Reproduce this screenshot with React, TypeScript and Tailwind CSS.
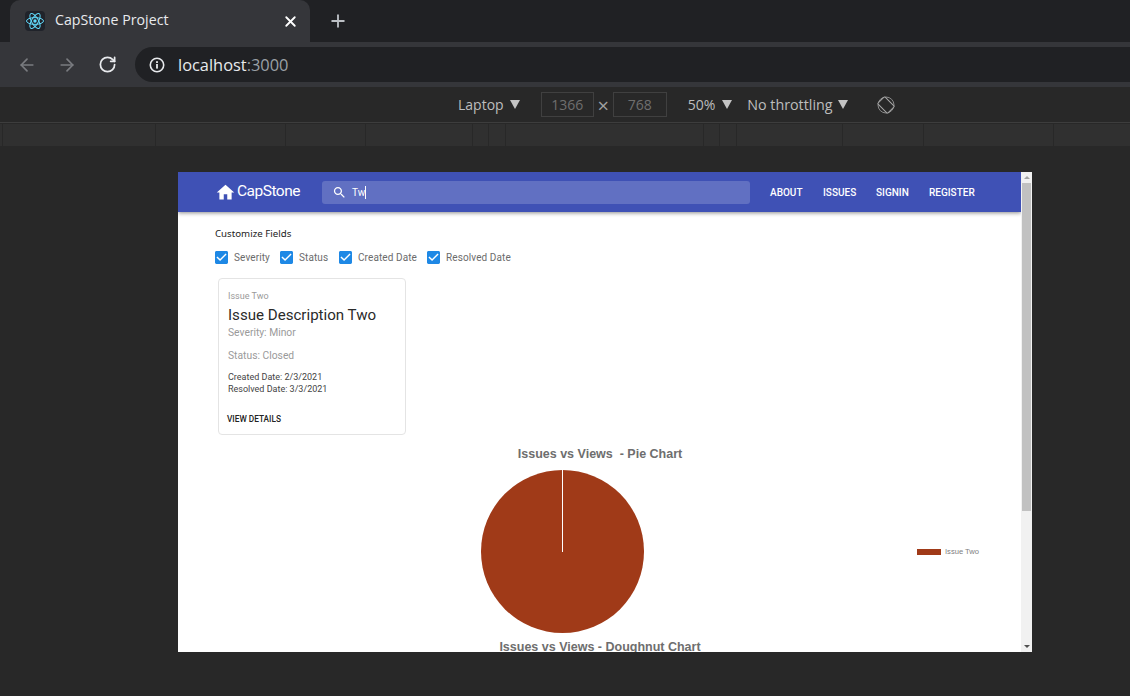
import React from 'react';
import { ArrowLeft, ArrowRight, RotateCw, X, Plus } from 'lucide-react';

const rulerSegments = [2, 152, 129, 79, 106, 15, 16, 197, 15, 16, 105, 80, 129];

function ReactFavicon() {
  return (
    <svg width="20" height="20" viewBox="0 0 20 20" className="bg-[#20232a] rounded-sm" fill="none" stroke="#61dafb" strokeWidth="1">
      <ellipse cx="10" cy="10" rx="8.5" ry="3.4" />
      <ellipse cx="10" cy="10" rx="8.5" ry="3.4" transform="rotate(60 10 10)" />
      <ellipse cx="10" cy="10" rx="8.5" ry="3.4" transform="rotate(120 10 10)" />
      <circle cx="10" cy="10" r="1.7" fill="#61dafb" stroke="none" />
    </svg>
  );
}

function InfoIcon() {
  return (
    <svg width="16" height="16" viewBox="0 0 16 16" fill="none">
      <circle cx="8" cy="8" r="6.7" stroke="#e8eaed" strokeWidth="1.6" />
      <rect x="7.1" y="7" width="1.8" height="4.6" fill="#e8eaed" />
      <rect x="7.1" y="4.2" width="1.8" height="1.8" fill="#e8eaed" />
    </svg>
  );
}

function Caret({ className }: { className: string }) {
  return (
    <svg width="10" height="9" viewBox="0 0 10 9" className={className}>
      <path d="M0 0h10L5 9z" fill="#c4c4c4" />
    </svg>
  );
}

function RotateIcon() {
  return (
    <svg width="18" height="18" viewBox="0 0 18 18" fill="none" stroke="#a8a8a8" strokeWidth="1">
      <circle cx="9" cy="9" r="8" stroke="#8a8a8a" />
      <rect x="4" y="2" width="10" height="14" rx="1.2" transform="rotate(-45 9 9)" fill="#282828" />
    </svg>
  );
}

function CheckField({ label, className }: { label: string; className: string }) {
  return (
    <div className={`flex items-center ${className}`}>
      <svg width="13" height="13" viewBox="3 3 18 18" className="mr-[6px] shrink-0">
        <path d="M19 3H5c-1.11 0-2 .9-2 2v14c0 1.1.89 2 2 2h14c1.11 0 2-.9 2-2V5c0-1.1-.89-2-2-2zm-9 14l-5-5 1.41-1.41L10 14.17l7.59-7.59L19 8l-9 9z" fill="#1e88e5" />
      </svg>
      <span className="text-[10px] text-[#6b6b6b] tracking-[0.1px]">{label}</span>
    </div>
  );
}

export default function App() {
  return (
    <div className="w-[1130px] h-[696px] overflow-hidden bg-[#282828] font-['Open_Sans',sans-serif]">
      {/* tab strip */}
      <div className="h-[42px] bg-[#202124] pl-[10px] flex">
        <div className="w-[300px] h-[42px] bg-[#35363a] rounded-t-[10px] flex items-center pl-[15px] pr-[11px]">
          <ReactFavicon />
          <span className="ml-[10px] pb-[2px] text-[14.2px] text-[#e8eaed] flex-1">CapStone Project</span>
          <X size={17} strokeWidth={2.6} className="text-white" />
        </div>
        <div className="ml-[18px] h-[42px] flex items-center">
          <Plus size={20} strokeWidth={2.2} className="text-[#bdc1c6]" />
        </div>
      </div>

      {/* toolbar */}
      <div className="h-[45px] bg-[#35363a] flex items-center pl-[17px]">
        <ArrowLeft size={20} className="text-[#7a7c80]" />
        <ArrowRight size={20} className="text-[#7a7c80] ml-[20px]" />
        <RotateCw size={19} strokeWidth={2.2} className="text-[#e8eaed] ml-[21px]" />
        <div className="ml-[18px] flex-1 h-[35px] bg-[#202124] rounded-l-[18px] flex items-center pl-[14px]">
          <InfoIcon />
          <span className="ml-[13px] pt-[1px] text-[16.4px] text-[#e8eaed]">localhost<span className="text-[#9aa0a6]">:3000</span></span>
        </div>
      </div>

      {/* devtools device bar */}
      <div className="h-[36px] bg-[#282828] border-b border-[#3d3d3d] flex items-center pl-[458px] text-[14px] text-[#bdbdbd]">
        <span>Laptop</span>
        <Caret className="ml-[6px]" />
        <div className="ml-[21px] w-[53px] h-[25px] border border-[#404040] flex items-center justify-center text-[#6f6f6f]">1366</div>
        <span className="w-[19px] text-center text-[20px] leading-none pt-[3px] text-[#a0a0a0]">×</span>
        <div className="w-[54px] h-[25px] border border-[#404040] flex items-center justify-center text-[#6f6f6f]">768</div>
        <span className="ml-[21px]">50%</span>
        <Caret className="ml-[7px]" />
        <span className="ml-[15px] text-[14.3px]">No throttling</span>
        <Caret className="ml-[5px]" />
        <div className="ml-[29px]"><RotateIcon /></div>
      </div>

      {/* ruler */}
      <div className="mt-[1px] h-[22px] flex gap-[1px] overflow-hidden">
        {rulerSegments.map((w, i) => (
          <div key={i} className="h-full bg-[#303030]" style={{ width: w }} />
        ))}
        <div className="flex-1 bg-[#303030]" />
      </div>

      {/* emulated viewport */}
      <div className="mt-[26px] ml-[178px] w-[854px] h-[480px] bg-white flex overflow-hidden">
        <div className="w-[843px] h-full font-['Roboto',sans-serif] overflow-hidden">
          <header className="h-[40px] bg-[#3f51b5] shadow-[0_1px_4px_rgba(0,0,0,0.45)] flex items-center pl-[37px] relative">
            <svg width="21" height="21" viewBox="0 0 24 24"><path d="M10 20v-6h4v6h5v-8h3L12 3 2 12h3v8z" fill="#fff" /></svg>
            <span className="ml-[1px] text-[15.5px] tracking-[-0.5px] text-white w-[85px]">CapStone</span>
            <div className="w-[428px] h-[23px] rounded-[3px] bg-[#6170c2] flex items-center pl-[10px]">
              <svg width="15" height="15" viewBox="0 0 24 24"><path d="M15.5 14h-.79l-.28-.27C15.41 12.59 16 11.11 16 9.5 16 5.91 13.09 3 9.5 3S3 5.91 3 9.5 5.91 16 9.5 16c1.61 0 3.09-.59 4.23-1.57l.27.28v.79l5 4.99L20.49 19l-4.99-5zm-6 0C7.01 14 5 11.99 5 9.5S7.01 5 9.5 5 14 7.01 14 9.5 11.99 14 9.5 14z" fill="#fff" /></svg>
              <span className="ml-[5px] text-[10px] text-white border-r border-white leading-[13px]">Tw</span>
            </div>
            <nav className="ml-[20px] flex text-[10px] font-medium text-white">
              <span className="w-[53px]">ABOUT</span>
              <span className="w-[53px]">ISSUES</span>
              <span className="w-[53px]">SIGNIN</span>
              <span>REGISTER</span>
            </nav>
          </header>

          <div className="pt-[15px] pl-[37px] font-['Noto_Sans',sans-serif] text-[9.7px] text-[#222] leading-[14px]">Customize Fields</div>
          <div className="mt-[9px] pl-[37px] h-[14px] flex">
            <CheckField label="Severity" className="w-[65px]" />
            <CheckField label="Status" className="w-[59px]" />
            <CheckField label="Created Date" className="w-[88px]" />
            <CheckField label="Resolved Date" className="w-[100px]" />
          </div>

          <div className="mt-[14px] ml-[40px] w-[188px] h-[157px] border border-[#e4e4e4] rounded-[4px] pt-[11px] pl-[9px]">
            <div className="text-[9px] leading-[12px] text-[#9a9a9a]">Issue Two</div>
            <div className="mt-[3px] text-[15.1px] leading-[20px] text-[#2a2a2a]">Issue Description Two</div>
            <div className="mt-[1px] text-[10.3px] leading-[14px] text-[#9a9a9a]">Severity: Minor</div>
            <div className="mt-[9px] text-[10.3px] leading-[14px] text-[#9a9a9a]">Status: Closed</div>
            <div className="mt-[8px] text-[9px] leading-[12px] text-[#444]">Created Date: 2/3/2021</div>
            <div className="text-[9px] leading-[12px] text-[#444]">Resolved Date: 3/3/2021</div>
            <div className="mt-[18px] -ml-[1px] text-[8.3px] leading-[12px] font-medium text-[#222]">VIEW DETAILS</div>
          </div>

          {/* pie chart */}
          <div className="font-['Liberation_Sans',sans-serif]">
            <div className="mt-[12px] ml-[40px] w-[764px] text-center text-[12.5px] font-bold leading-[14px] text-[#6e6e6e]">Issues vs Views&nbsp; - Pie Chart</div>
            <div className="mt-[9px] h-[163px] flex items-center">
              <svg width="163" height="163" viewBox="0 0 163 163" className="ml-[303px] shrink-0">
                <circle cx="81.5" cy="81.5" r="81.5" fill="#a03a18" />
                <rect x="81" y="0" width="1" height="82" fill="#fff" />
              </svg>
              <div className="ml-[273px] w-[24px] h-[6px] bg-[#a03a18] shrink-0" />
              <span className="ml-[4px] text-[7.6px] text-[#808080]">Issue Two</span>
            </div>
            <div className="mt-[7px] ml-[40px] w-[764px] text-center text-[12.5px] font-bold leading-[14px] text-[#6e6e6e]">Issues vs Views - Doughnut Chart</div>
          </div>
        </div>

        {/* scrollbar */}
        <div className="w-[11px] h-full bg-[#f1f1f1] flex flex-col items-center">
          <div className="h-[11px] flex items-center"><div className="w-0 h-0 border-x-[3px] border-x-transparent border-b-[3px] border-b-[#a3a3a3]" /></div>
          <div className="w-[9px] h-[328px] bg-[#c1c1c1]" />
          <div className="flex-1" />
          <div className="h-[11px] flex items-center"><div className="w-0 h-0 border-x-[3px] border-x-transparent border-t-[3px] border-t-[#505050]" /></div>
        </div>
      </div>
    </div>
  );
}
